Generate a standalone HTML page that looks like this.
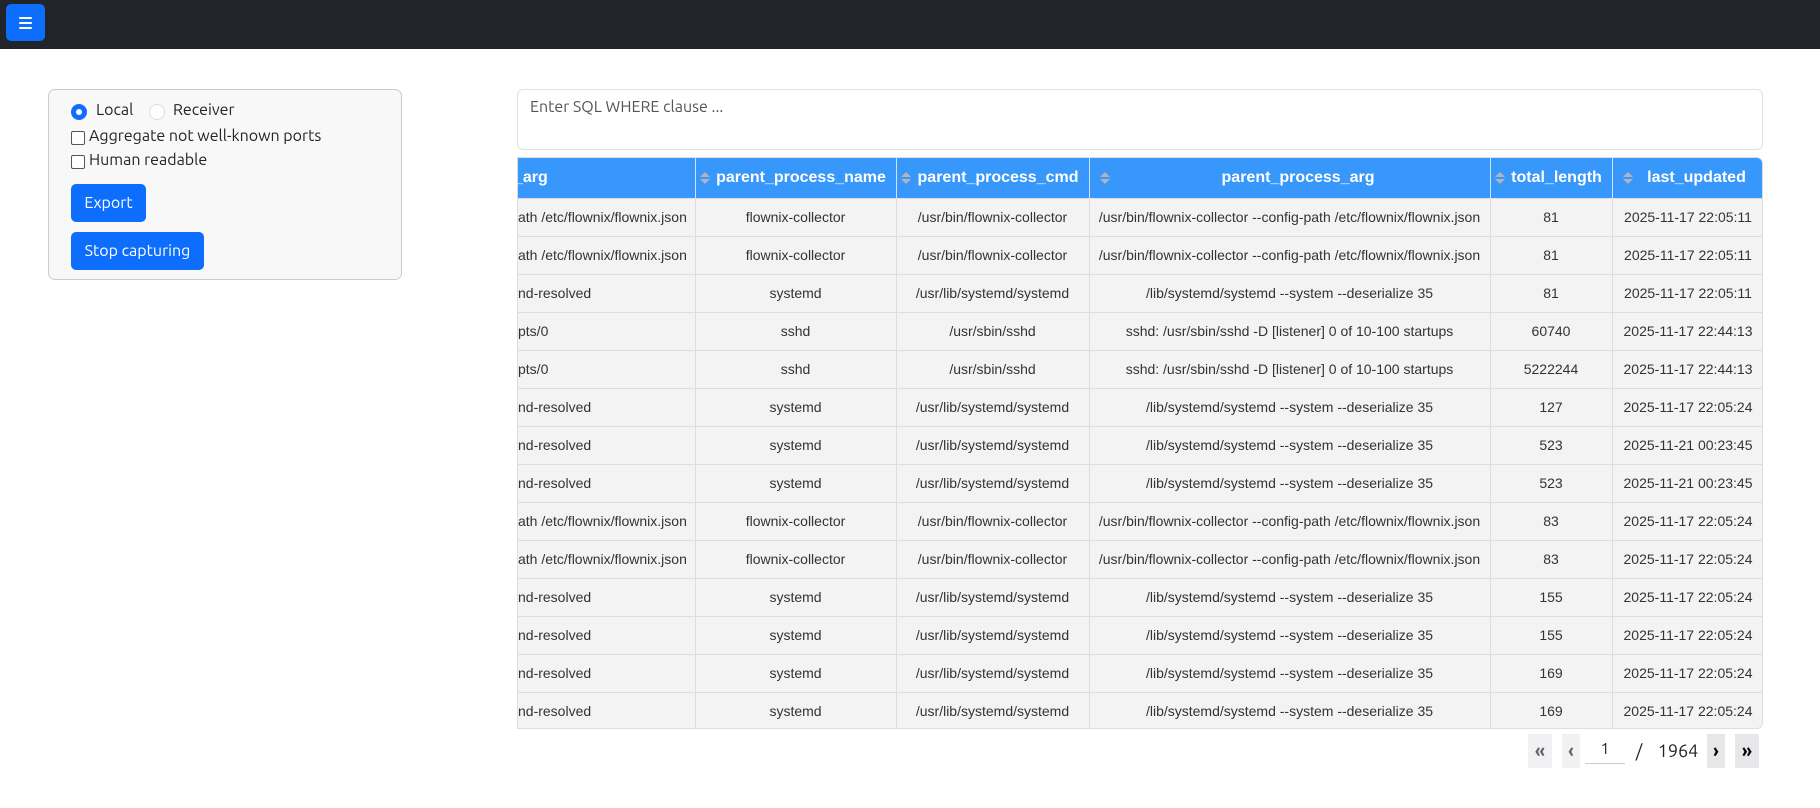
<!DOCTYPE html>
<html><head><meta charset="utf-8">
<style>
*{box-sizing:border-box}
body{margin:0;width:1820px;height:808px;background:#fff;font-family:"Ubuntu","DejaVu Sans","Liberation Sans",sans-serif;color:#212529;overflow:hidden;position:relative}
.nav{position:absolute;left:0;top:0;width:1820px;height:49px;background:#212529}
.menu{position:absolute;left:6px;top:4px;width:39px;height:37px;background:#0d6efd;border-radius:5px}
.menu i{position:absolute;left:13px;width:13px;height:2px;background:#fff;border-radius:1px}
.panel{position:absolute;left:48px;top:89px;width:354px;height:191px;background:#f8f8f8;border:1px solid #ccc;border-radius:7px;font-size:16px}
.lbl{position:absolute;white-space:nowrap}
.radio{position:absolute;width:16px;height:16px;border-radius:50%}
.cb{position:absolute;width:14px;height:14px;border:1px solid #555;border-radius:2px;background:#fff}
.btn{position:absolute;background:#0d6efd;color:#fff;border-radius:5px;font-size:16px;display:flex;align-items:center;justify-content:center}
.ta{position:absolute;left:517px;top:89px;width:1246px;height:61px;border:1px solid #dee2e6;border-radius:6px;font-size:16px;color:#555;padding:8px 12px}
.tw{position:absolute;left:517px;top:157px;width:1246px;height:572px;border:1px solid #ddd;border-radius:0 6px 6px 0;overflow:hidden;background:#f3f3f3}
table{border-collapse:collapse;table-layout:fixed;width:1246px;font-family:"Liberation Sans",Arial,sans-serif;font-size:14px;color:#333}
th{background:#3797fb;color:#fff;font-size:16px;height:40px;border-right:1px solid #cfe4fb;padding:0 4px;font-weight:bold;white-space:nowrap;overflow:hidden}
th .f{display:flex;align-items:center}
th .f span{flex:1;text-align:center}
td{height:38px;border-right:1px solid #ddd;border-top:1px solid #ddd;text-align:center;white-space:nowrap;overflow:hidden;padding:0 4px;background:#f3f3f3}
td:first-child{text-align:left;padding:0}
th:first-child{text-align:left;padding:0}
.s{display:inline-block;width:10px;height:14px;position:relative;flex:none;margin-right:1px}
.s:before{content:"";position:absolute;left:0;top:1px;border:5px solid transparent;border-bottom:5px solid #b0b4bb;border-top:0}
.s:after{content:"";position:absolute;left:0;top:8px;border:5px solid transparent;border-top:5px solid #b0b4bb;border-bottom:0}
.pg{position:absolute;top:734px;height:34px;display:flex;align-items:center;justify-content:center;font-weight:bold;font-size:18px}
</style></head><body>
<div class="nav"><div class="menu"><i style="top:13px"></i><i style="top:18px"></i><i style="top:23px"></i></div></div>

<div class="panel">
 <div class="radio" style="left:22px;top:14px;background:#0d6efd"><div style="position:absolute;left:5px;top:5px;width:6px;height:6px;border-radius:50%;background:#fff"></div></div>
 <div class="lbl" style="left:47px;top:11px">Local</div>
 <div class="radio" style="left:100px;top:14px;background:#fff;border:1px solid #ddd"></div>
 <div class="lbl" style="left:124px;top:11px">Receiver</div>
 <div class="cb" style="left:22px;top:41px"></div>
 <div class="lbl" style="left:40px;top:37px">Aggregate not well-known ports</div>
 <div class="cb" style="left:22px;top:65px"></div>
 <div class="lbl" style="left:40px;top:61px">Human readable</div>
</div>
<div class="btn" style="left:71px;top:184px;width:75px;height:38px">Export</div>
<div class="btn" style="left:71px;top:232px;width:133px;height:38px">Stop capturing</div>

<div class="ta">Enter SQL WHERE clause ...</div>

<div class="tw">
<table>
<colgroup><col style="width:177px"><col style="width:201px"><col style="width:193px"><col style="width:401px"><col style="width:122px"><col style="width:152px"></colgroup>
<tr><th><span style="margin-left:-4px">_arg</span></th><th><div class="f"><i class="s"></i><span>parent_process_name</span></div></th><th><div class="f"><i class="s"></i><span>parent_process_cmd</span></div></th><th><div class="f" style="padding-left:6px"><i class="s"></i><span>parent_process_arg</span></div></th><th><div class="f"><i class="s"></i><span>total_length</span></div></th><th><div class="f" style="padding-left:6px"><i class="s"></i><span>last_updated</span></div></th></tr>
<tr><td>ath /etc/flownix/flownix.json</td><td>flownix-collector</td><td>/usr/bin/flownix-collector</td><td>/usr/bin/flownix-collector --config-path /etc/flownix/flownix.json</td><td>81</td><td>2025-11-17 22:05:11</td></tr>
<tr><td>ath /etc/flownix/flownix.json</td><td>flownix-collector</td><td>/usr/bin/flownix-collector</td><td>/usr/bin/flownix-collector --config-path /etc/flownix/flownix.json</td><td>81</td><td>2025-11-17 22:05:11</td></tr>
<tr><td>nd-resolved</td><td>systemd</td><td>/usr/lib/systemd/systemd</td><td>/lib/systemd/systemd --system --deserialize 35</td><td>81</td><td>2025-11-17 22:05:11</td></tr>
<tr><td>pts/0</td><td>sshd</td><td>/usr/sbin/sshd</td><td>sshd: /usr/sbin/sshd -D [listener] 0 of 10-100 startups</td><td>60740</td><td>2025-11-17 22:44:13</td></tr>
<tr><td>pts/0</td><td>sshd</td><td>/usr/sbin/sshd</td><td>sshd: /usr/sbin/sshd -D [listener] 0 of 10-100 startups</td><td>5222244</td><td>2025-11-17 22:44:13</td></tr>
<tr><td>nd-resolved</td><td>systemd</td><td>/usr/lib/systemd/systemd</td><td>/lib/systemd/systemd --system --deserialize 35</td><td>127</td><td>2025-11-17 22:05:24</td></tr>
<tr><td>nd-resolved</td><td>systemd</td><td>/usr/lib/systemd/systemd</td><td>/lib/systemd/systemd --system --deserialize 35</td><td>523</td><td>2025-11-21 00:23:45</td></tr>
<tr><td>nd-resolved</td><td>systemd</td><td>/usr/lib/systemd/systemd</td><td>/lib/systemd/systemd --system --deserialize 35</td><td>523</td><td>2025-11-21 00:23:45</td></tr>
<tr><td>ath /etc/flownix/flownix.json</td><td>flownix-collector</td><td>/usr/bin/flownix-collector</td><td>/usr/bin/flownix-collector --config-path /etc/flownix/flownix.json</td><td>83</td><td>2025-11-17 22:05:24</td></tr>
<tr><td>ath /etc/flownix/flownix.json</td><td>flownix-collector</td><td>/usr/bin/flownix-collector</td><td>/usr/bin/flownix-collector --config-path /etc/flownix/flownix.json</td><td>83</td><td>2025-11-17 22:05:24</td></tr>
<tr><td>nd-resolved</td><td>systemd</td><td>/usr/lib/systemd/systemd</td><td>/lib/systemd/systemd --system --deserialize 35</td><td>155</td><td>2025-11-17 22:05:24</td></tr>
<tr><td>nd-resolved</td><td>systemd</td><td>/usr/lib/systemd/systemd</td><td>/lib/systemd/systemd --system --deserialize 35</td><td>155</td><td>2025-11-17 22:05:24</td></tr>
<tr><td>nd-resolved</td><td>systemd</td><td>/usr/lib/systemd/systemd</td><td>/lib/systemd/systemd --system --deserialize 35</td><td>169</td><td>2025-11-17 22:05:24</td></tr>
<tr><td>nd-resolved</td><td>systemd</td><td>/usr/lib/systemd/systemd</td><td>/lib/systemd/systemd --system --deserialize 35</td><td>169</td><td>2025-11-17 22:05:24</td></tr>
</table>
</div>

<div class="pg" style="left:1528px;width:24px;background:#f1f1f3;color:#666">«</div>
<div class="pg" style="left:1562px;width:18px;background:#f1f1f3;color:#666">‹</div>
<div class="pg" style="left:1585px;width:40px;font-weight:normal;font-size:16px;border-bottom:1px solid #ccc;height:30px">1</div>
<div class="pg" style="left:1632px;width:14px;font-weight:normal;font-size:18px">/</div>
<div class="pg" style="left:1658px;width:40px;font-weight:normal;font-size:18px">1964</div>
<div class="pg" style="left:1707px;width:18px;background:#e7e7ea;color:#000">›</div>
<div class="pg" style="left:1735px;width:24px;background:#e7e7ea;color:#000">»</div>
</body></html>
